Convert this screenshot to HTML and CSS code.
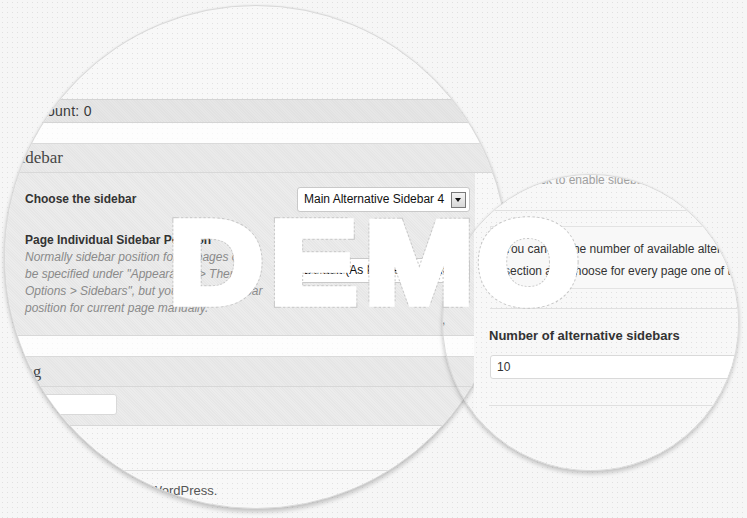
FILE: index.html
```html
<!DOCTYPE html>
<html>
<head>
<meta charset="utf-8">
<link rel="stylesheet" href="styles.css">
</head>
<body>
<div class="stage">
  <div class="lens lens-big">
    <div class="screen">
      <div class="gap-top"></div>
      <div class="statusbar"><span class="status-text">Word count: 0</span></div>
      <div class="blank-row"></div>
      <div class="box-head"><span class="head-title">Sidebar</span></div>
      <div class="box-body sidebar-body">
        <div class="field field-one">
          <div class="label">Choose the sidebar</div>
          <div class="select">Main Alternative Sidebar 4<span class="arrow"></span></div>
        </div>
        <div class="field field-two">
          <div class="label-col">
            <div class="label">Page Individual Sidebar Position</div>
            <p class="desc">Normally sidebar position for all pages can<br>be specified under "Appearance &gt; Theme<br>Options &gt; Sidebars", but you can set sidebar<br>position for current page manually.</p>
          </div>
          <div class="select-col">
            <div class="select select-two">Default (As In Theme Options)</div>
            <div class="note-comma">,</div>
          </div>
        </div>
      </div>
      <div class="blank-row"></div>
      <div class="box-head head-two"><span class="head-title">Slug</span></div>
      <div class="box-body slug-body"><div class="input slug-input"></div></div>
      <div class="empty"></div>
      <div class="footer"><span class="footer-text">Thank you for creating with WordPress.</span></div>
    </div>
  </div>

  <div class="lens lens-small">
    <div class="screen">
      <div class="enable">Check to enable sidebars</div>
      <div class="s-line"></div>
      <div class="notice">You can set the number of available alternative sidebars in this<br>section and choose for every page one of them.</div>
      <div class="s-gap"></div>
      <div class="s-field">
        <div class="s-label">Number of alternative sidebars</div>
        <div class="input num-input">10</div>
      </div>
    </div>
  </div>

  <svg class="watermark" width="747" height="518" viewBox="0 0 747 518">
    <g transform="scale(1.12 1)">
      <text class="wm-text wm-outline" x="151 241.5 326 426.5" y="303">DEMO</text>
      <text class="wm-text wm-fill" x="151 241.5 326 426.5" y="303">DEMO</text>
    </g>
  </svg>
</div>
</body>
</html>
```
FILE: styles.css
```css
html, body {
  margin: 0;
  padding: 0;
}
body {
  width: 747px;
  height: 518px;
  overflow: hidden;
  font-family: "Liberation Sans", Arial, sans-serif;
}
.stage {
  position: relative;
  width: 747px;
  height: 518px;
  overflow: hidden;
  background-color: #f6f6f6;
  background-image: radial-gradient(circle, #e0e0e0 0.6px, transparent 1px);
  background-size: 5px 5px;
}
.lens {
  position: absolute;
  box-sizing: border-box;
  border-radius: 50%;
  overflow: hidden;
  border: 1px solid #d9d9d9;
  box-shadow: 0 3px 4px rgba(0,0,0,0.2), 0 0 2px rgba(0,0,0,0.06);
}
.lens-big {
  left: 4px;
  top: 5px;
  width: 504px;
  height: 504px;
  background-color: #f8f8f8;
  background-image: radial-gradient(circle, #e2e2e2 0.6px, transparent 1px);
  background-size: 5px 5px;
}
.lens-small {
  left: 442px;
  top: 174px;
  width: 297px;
  height: 297px;
}
/* the small lens is see-through over the left strip, where the big lens' panel continues */
.lens-small::before {
  content: "";
  position: absolute;
  left: 31px;
  top: 0;
  right: 0;
  bottom: 0;
  background-color: #f8f8f8;
  background-image: radial-gradient(circle, #e2e2e2 0.6px, transparent 1px);
  background-size: 5px 5px;
}
.screen {
  position: relative;
  width: 100%;
  height: 100%;
  color: #333;
  font-size: 12px;
}

/* big lens */
.gap-top { height: 93px; }
.statusbar {
  height: 22px;
  border-top: 1px solid #d4d4d4;
  border-bottom: 1px solid #d4d4d4;
  background-color: #e6e6e6;
  background-image: repeating-linear-gradient(45deg, rgba(0,0,0,0.02) 0 1px, transparent 1px 2px);
  line-height: 22px;
  font-size: 14px;
}
.status-text { margin-left: -4px; color: #3a3a3a; letter-spacing: 0.3px; }
.blank-row {
  height: 20px;
  border-bottom: 1px solid #dadada;
  background: rgba(255,255,255,0.65);
}
.box-head {
  height: 28px;
  border-bottom: 1px solid #d8d8d8;
  background-color: #eaeaea;
  background-image: repeating-linear-gradient(45deg, rgba(0,0,0,0.02) 0 1px, transparent 1px 2px);
  line-height: 28px;
  padding-left: 6px;
}
.head-two { height: 29px; line-height: 29px; padding-left: 5px; }
.head-title {
  font-family: "Liberation Serif", "DejaVu Serif", serif;
  font-size: 17px;
  color: #464646;
}
.box-body {
  border-bottom: 1px solid #d8d8d8;
  background-color: #ececec;
  background-image: repeating-linear-gradient(45deg, rgba(0,0,0,0.025) 0 1px, transparent 1px 2px);
  box-sizing: border-box;
}
.sidebar-body {
  height: 163px;
  width: 470px;
  padding: 14px 0 0 20px;
}
.field {
  display: grid;
  grid-template-columns: 272px 173px;
}
.field-one { align-items: center; }
.field-two { margin-top: 20px; align-items: start; }
.label {
  font-weight: 700;
  font-size: 12px;
  color: #333;
  line-height: 17px;
}
.desc {
  margin: 0;
  font-style: italic;
  color: #8a8a8a;
  font-size: 12px;
  line-height: 17px;
  white-space: nowrap;
}
.select {
  box-sizing: border-box;
  height: 25px;
  background: #fff;
  border: 1px solid #c9c9c9;
  border-radius: 3px;
  padding: 0 0 0 6px;
  line-height: 23px;
  font-size: 12px;
  color: #111;
  display: flex;
  align-items: center;
  justify-content: space-between;
  white-space: nowrap;
}
.select-two { margin-top: 26px; padding-left: 6px; }
.note-comma {
  margin: 31px 0 0 145px;
  line-height: 12px;
  color: #777;
}
.arrow {
  width: 13px;
  height: 14px;
  margin-right: 3px;
  border: 1px solid #7a7a7a;
  background: linear-gradient(#f4f4f4, #d8d8d8);
  position: relative;
}
.arrow::after {
  content: "";
  position: absolute;
  left: 3px;
  top: 5px;
  border-left: 3.5px solid transparent;
  border-right: 3.5px solid transparent;
  border-top: 4px solid #111;
}
.slug-body {
  height: 39px;
  width: 470px;
  padding: 7px 0 0 35px;
}
.input {
  box-sizing: border-box;
  background: #fff;
  border: 1px solid #d9d9d9;
  border-radius: 3px;
}
.slug-input { width: 77px; height: 21px; }
.empty { height: 44px; }
.footer {
  border-top: 1px solid #dcdcdc;
  padding-top: 13px;
  line-height: 14px;
  font-size: 13px;
  color: #555;
}
.footer-text { margin-left: -15px; }

/* small lens */
.enable {
  margin: -2px 0 0 75px;
  line-height: 14px;
  color: #a0a0a0;
  white-space: nowrap;
}
.s-line {
  margin: 23px 0 0 31px;
  height: 0;
  border-top: 1px solid #e0e0e0;
}
.notice {
  margin: 15px 0 0 47px;
  height: 50px;
  padding: 11px 0 0 13px;
  border: 1px solid #e3e3e3;
  border-right: 0;
  background: #f8f8f8;
  line-height: 22px;
  color: #333;
  white-space: nowrap;
}
.s-gap {
  margin: 19px 0 0 47px;
  border-top: 1px solid #e0e0e0;
}
.s-field {
  margin-left: 46px;
  padding-top: 19px;
  padding-bottom: 26px;
  border-bottom: 1px solid #e0e0e0;
}
.s-label {
  font-weight: 700;
  font-size: 13px;
  line-height: 16px;
  color: #333;
}
.num-input {
  margin: 11px 0 0 1px;
  height: 24px;
  line-height: 22px;
  padding-left: 6px;
  font-size: 12px;
  color: #333;
}

/* watermark */
.watermark {
  position: absolute;
  left: 0;
  top: 0;
  pointer-events: none;
}
.wm-text {
  font-family: "Liberation Sans", Arial, sans-serif;
  font-weight: 700;
  font-size: 116px;
}
.wm-outline {
  fill: none;
  stroke: #c6c6c6;
  stroke-width: 9.4;
  stroke-dasharray: 2 2;
}
.wm-fill {
  fill: #ffffff;
  stroke: #ffffff;
  stroke-width: 7.6;
  stroke-linejoin: miter;
}
```
